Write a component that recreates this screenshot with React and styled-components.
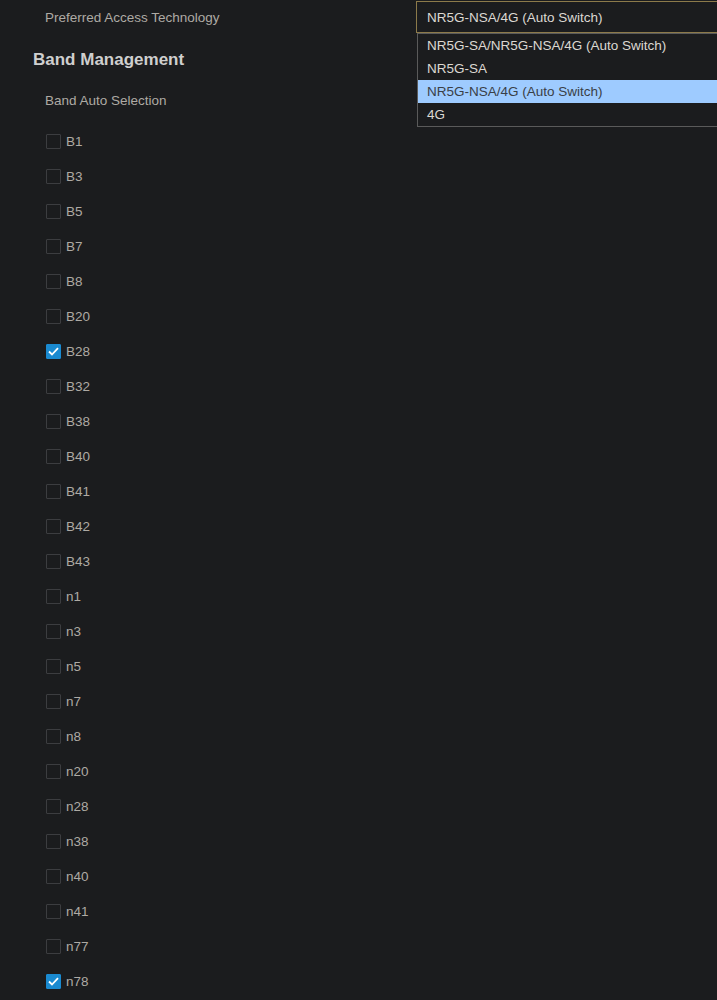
import React from "react";
import styled, { createGlobalStyle } from "styled-components";

const Global = createGlobalStyle`
  html, body { margin: 0; padding: 0; background: #1b1c1e; }
  body { font-family: "Liberation Sans", Arial, sans-serif; overflow: hidden; }
`;

const Page = styled.div`
  width: 717px;
  min-height: 1000px;
  background: #1b1c1e;
  overflow: hidden;
`;

const TopRow = styled.div`
  display: flex;
  align-items: flex-start;
  height: 34px;
  position: relative;
`;

const FieldLabel = styled.div`
  color: #aeaaa4;
  font-size: 13.5px;
  padding-left: 45px;
  padding-top: 10px;
  width: 416px;
  flex: 0 0 416px;
  box-sizing: border-box;
`;

const SelectWrap = styled.div`
  position: relative;
  flex: 0 0 330px;
  width: 330px;
  margin-top: 1px;
`;

const SelectBox = styled.div`
  height: 32px;
  box-sizing: border-box;
  border: 1px solid #8c7a4a;
  display: flex;
  align-items: center;
  padding-left: 10px;
  color: #dcd8d2;
  font-size: 13.5px;
`;

const Menu = styled.ul`
  position: absolute;
  top: 32px;
  left: 1px;
  right: 0;
  margin: 0;
  padding: 0;
  list-style: none;
  background: #1b1c1e;
  border: 1px solid #5a5a5a;
  z-index: 10;
`;

const Option = styled.li`
  height: 23px;
  line-height: 23px;
  padding-left: 9px;
  font-size: 13.5px;
  color: ${p => (p.$active ? "#3a3f47" : "#dcd8d2")};
  background: ${p => (p.$active ? "#9ecbff" : "transparent")};
`;

const Heading = styled.h2`
  margin: 0;
  padding: 16px 0 0 33px;
  color: #cfcfcf;
  font-size: 17px;
  font-weight: bold;
  line-height: 20px;
`;

const SubLabel = styled.div`
  color: #aeaaa4;
  font-size: 13.5px;
  padding: 23px 0 0 45px;
  line-height: 15px;
`;

const List = styled.div`
  display: flex;
  flex-direction: column;
  padding: 16px 0 0 46px;
`;

const Row = styled.label`
  display: flex;
  align-items: center;
  height: 35px;
  gap: 5px;
`;

const Box = styled.span`
  width: 15px;
  height: 15px;
  box-sizing: border-box;
  border-radius: 1px;
  border: 1px solid ${p => (p.$checked ? "#1a8ad0" : "#3c3d40")};
  background: ${p => (p.$checked ? "#1a8ad0" : "transparent")};
  display: flex;
  align-items: center;
  justify-content: center;
`;

const BandText = styled.span`
  color: #aeaaa4;
  font-size: 13.5px;
`;

const bands = [
  "B1","B3","B5","B7","B8","B20","B28","B32","B38","B40","B41","B42","B43",
  "n1","n3","n5","n7","n8","n20","n28","n38","n40","n41","n77","n78",
];
const checked = new Set(["B28", "n78"]);

const options = [
  "NR5G-SA/NR5G-NSA/4G (Auto Switch)",
  "NR5G-SA",
  "NR5G-NSA/4G (Auto Switch)",
  "4G",
];

export default function App() {
  return (
    <Page>
      <Global />
      <TopRow>
        <FieldLabel>Preferred Access Technology</FieldLabel>
        <SelectWrap>
          <SelectBox>NR5G-NSA/4G (Auto Switch)</SelectBox>
          <Menu>
            {options.map(o => (
              <Option key={o} $active={o === "NR5G-NSA/4G (Auto Switch)"}>{o}</Option>
            ))}
          </Menu>
        </SelectWrap>
      </TopRow>
      <Heading>Band Management</Heading>
      <SubLabel>Band Auto Selection</SubLabel>
      <List>
        {bands.map(b => (
          <Row key={b}>
            <Box $checked={checked.has(b)}>
              {checked.has(b) && (
                <svg width="11" height="9" viewBox="0 0 11 9">
                  <path d="M1 4.5 L4 7.5 L10 1.2" fill="none" stroke="#fff" strokeWidth="1.8" />
                </svg>
              )}
            </Box>
            <BandText>{b}</BandText>
          </Row>
        ))}
      </List>
    </Page>
  );
}
